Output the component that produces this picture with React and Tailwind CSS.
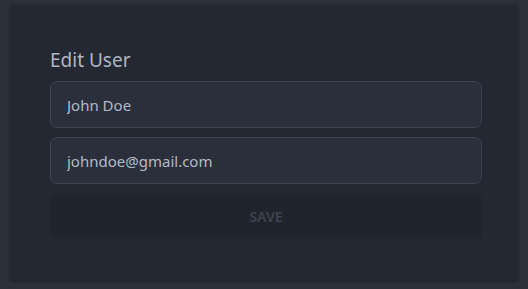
export default function App() {
  return (
    <div className="min-h-[289px] w-full bg-[#2b303b] pt-[5px] px-[10px] pb-[6px]" style={{ fontFamily: '"Noto Sans", "Open Sans", sans-serif' }}>
      <div className="bg-[#232833] pl-10 pr-[36px] pt-[41px] pb-[42px] shadow-[0_1px_3px_rgba(0,0,0,0.3)]">
        <h2 className="text-[19px] leading-[28px] text-[#b0b6c2] mb-[7px]">Edit User</h2>
        <div className="flex flex-col gap-[9px]">
          <input
            className="h-[47px] w-full rounded-[7px] border border-[#3d4250] bg-[#2a2f3c] px-4 text-[15px] text-[#b4bac6] outline-none"
            defaultValue="John Doe"
          />
          <input
            className="h-[47px] w-full rounded-[7px] border border-[#3d4250] bg-[#2a2f3c] px-4 text-[15px] text-[#b4bac6] outline-none"
            defaultValue="johndoe@gmail.com"
          />
          <button className="h-[46px] w-full rounded-[7px] bg-[#1f242d] text-[14px] font-semibold text-[#3e4350]">
            SAVE
          </button>
        </div>
      </div>
    </div>
  );
}
